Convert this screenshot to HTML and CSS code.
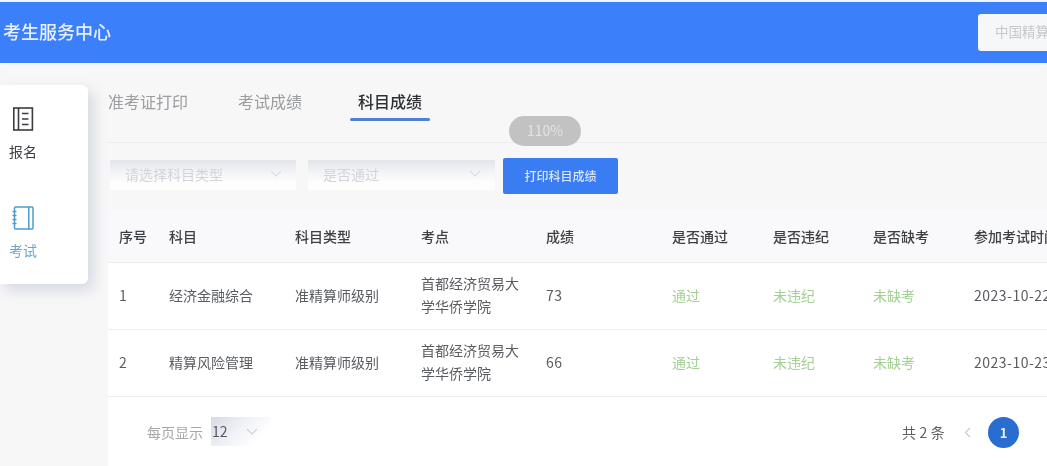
FILE: index.html
```html
<!DOCTYPE html>
<html lang="zh-CN">
<head>
<meta charset="utf-8">
<title>考生服务中心</title>
<link rel="stylesheet" href="styles.css">
</head>
<body>
<div class="page">
  <header class="topbar">
    <div class="brand">考生服务中心</div>
    <div class="org-input">中国精算师协会</div>
  </header>
  <div class="content">
    <aside class="sidebar">
      <div class="nav-item">
        <svg class="nav-icon" width="24" height="26" viewBox="0 0 24 26" fill="none" stroke="#3a3d42" stroke-width="1.6">
          <rect x="2.8" y="2" width="18.6" height="22"/>
          <path d="M7.5 2v22M11 7.5h6.5M11 13h6.5M11 18.5h6.5"/>
        </svg>
        <span class="nav-label">报名</span>
      </div>
      <div class="nav-item is-active">
        <svg class="nav-icon" width="24" height="26" viewBox="0 0 24 26" fill="none" stroke="#4f9cc9" stroke-width="1.5">
          <rect x="3.5" y="2" width="18.5" height="22" rx="1"/>
          <path d="M17.8 2v22M1.5 6.5h4M1.5 10.5h4M1.5 14.5h4M1.5 18.5h4"/>
        </svg>
        <span class="nav-label">考试</span>
      </div>
    </aside>
    <main class="main">
      <nav class="tabs">
        <span class="tab">准考证打印</span>
        <span class="tab">考试成绩</span>
        <span class="tab is-active">科目成绩</span>
        <span class="zoom-badge">110%</span>
      </nav>
      <div class="filters">
        <div class="select select-wide"><span>请选择科目类型</span><svg class="chev" width="12" height="7" viewBox="0 0 12 7"><path d="M1 1l5 5 5-5" fill="none" stroke="#dcdee2" stroke-width="1.2"/></svg></div>
        <div class="select select-pass"><span>是否通过</span><svg class="chev" width="12" height="7" viewBox="0 0 12 7"><path d="M1 1l5 5 5-5" fill="none" stroke="#dcdee2" stroke-width="1.2"/></svg></div>
        <button class="print-btn" type="button">打印科目成绩</button>
      </div>
      <section class="panel">
        <table class="grades">
          <thead>
            <tr>
              <th class="c-no">序号</th><th class="c-sub">科目</th><th class="c-type">科目类型</th><th class="c-site">考点</th><th class="c-score">成绩</th><th class="c-pass">是否通过</th><th class="c-vio">是否违纪</th><th class="c-abs">是否缺考</th><th class="c-time">参加考试时间</th>
            </tr>
          </thead>
          <tbody>
            <tr>
              <td>1</td><td>经济金融综合</td><td>准精算师级别</td><td>首都经济贸易大学华侨学院</td><td class="num">73</td><td class="ok">通过</td><td class="ok">未违纪</td><td class="ok">未缺考</td><td class="time">2023-10-22 09:00</td>
            </tr>
            <tr>
              <td>2</td><td>精算风险管理</td><td>准精算师级别</td><td>首都经济贸易大学华侨学院</td><td class="num">66</td><td class="ok">通过</td><td class="ok">未违纪</td><td class="ok">未缺考</td><td class="time">2023-10-23 09:00</td>
            </tr>
          </tbody>
        </table>
        <footer class="pager">
          <div class="page-size"><span class="page-size-label">每页显示</span><div class="size-select"><span>12</span><svg class="chev" width="12" height="7" viewBox="0 0 12 7"><path d="M1 1l5 5 5-5" fill="none" stroke="#cfd1d6" stroke-width="1.2"/></svg></div></div>
          <div class="page-nav">
            <span class="total">共 2 条</span>
            <svg class="prev" width="7" height="11" viewBox="0 0 7 11"><path d="M6 1L1.5 5.5 6 10" fill="none" stroke="#c9cbce" stroke-width="1.3"/></svg>
            <span class="page-no">1</span>
          </div>
        </footer>
      </section>
    </main>
  </div>
</div>
</body>
</html>
```
FILE: styles.css
```css
* { box-sizing: border-box; }
html, body { margin: 0; height: 100%; }
body {
  overflow: hidden;
  background: #f7f7f7;
  font-family: "Noto Sans CJK SC", "Noto Sans", sans-serif;
  color: #55585d;
}
.page {
  width: 1047px;
  height: 466px;
  overflow: hidden;
  padding-top: 2px;
  background: linear-gradient(#f0f6fd 0, #f0f6fd 2px, #f7f7f7 2px);
  filter: blur(0.6px);
}
.topbar {
  height: 61px;
  background: #3c7ffa;
  display: flex;
  align-items: center;
  justify-content: space-between;
  box-shadow: 0 3px 4px #f1f6fd;
}
.brand {
  padding-left: 3px;
  color: #e9f0fb;
  font-size: 18px;
  line-height: 24px;
  font-weight: 500;
  margin-top: -4px;
}
.org-input {
  width: 69px;
  height: 37px;
  padding-left: 17px;
  overflow: hidden;
  white-space: nowrap;
  line-height: 35px;
  font-size: 13.5px;
  color: #c6c8cc;
  background: #f6f7f9;
  border-radius: 3px 0 0 3px;
}
.content {
  display: flex;
  align-items: flex-start;
  width: 1300px;
}
.sidebar {
  flex: none;
  width: 88px;
  height: 199px;
  margin-top: 22px;
  margin-right: 20px;
  padding-top: 21px;
  background: #fff;
  border-radius: 0 6px 6px 0;
  box-shadow: 5px 6px 14px rgba(170, 178, 200, 0.45);
  display: flex;
  flex-direction: column;
  gap: 44px;
}
.nav-item {
  display: flex;
  flex-direction: column;
  align-items: center;
  width: 46px;
  gap: 9px;
  color: #3c3f44;
  font-size: 14px;
  line-height: 20px;
}
.nav-item.is-active { color: #6aa7cd; }
.nav-icon { display: block; }
.main { flex: none; width: 1192px; }
.tabs {
  position: relative;
  height: 80px;
  padding-top: 26px;
  display: flex;
  align-items: flex-start;
  border-bottom: 1px solid #ececee;
  font-size: 16px;
  line-height: 24px;
}
.tab {
  position: relative;
  color: #9a9c9f;
  margin-right: 50px;
}
.tab + .tab { margin-right: 56px; }
.tab.is-active {
  color: #2d3034;
  font-weight: 500;
}
.tab.is-active::after {
  content: "";
  position: absolute;
  left: -8px;
  right: -8px;
  top: 29px;
  height: 3px;
  border-radius: 2px;
  background: #4d82d6;
}
.zoom-badge {
  position: absolute;
  left: 401px;
  top: 53px;
  width: 72px;
  height: 30px;
  border-radius: 15px;
  background: #c2c2c2;
  color: #e3e3e3;
  font-size: 14px;
  line-height: 29px;
  text-align: center;
}
.filters {
  height: 67px;
  padding-top: 15px;
  display: flex;
  align-items: flex-start;
}
.select {
  height: 30px;
  margin-top: 2px;
  display: flex;
  align-items: center;
  justify-content: space-between;
  padding: 0 14px 3px 15px;
  color: #d2d4d8;
  font-size: 14px;
  background: linear-gradient(180deg, #e3e5eb 0, #f4f5f7 45%, #fdfdfd 75%, #fdfdfd 100%);
}
.select-wide { width: 186px; margin-left: 2px; }
.select-pass { width: 187px; margin-left: 12px; }
.chev { flex: none; }
.print-btn {
  width: 115px;
  height: 36px;
  margin-left: 8px;
  border: 0;
  border-radius: 2px;
  background: #3a7df2;
  color: #d9e6fb;
  font: 500 12px/36px "Noto Sans CJK SC", sans-serif;
  padding: 0;
}
.panel {
  background: #fff;
}
.grades {
  border-collapse: collapse;
  table-layout: fixed;
  width: 1192px;
}
.grades th {
  height: 52px;
  padding: 0 0 0 11px;
  text-align: left;
  font-size: 14px;
  font-weight: 500;
  color: #3c3f44;
  background: #f9f9fb;
  border-bottom: 1px solid #eeeef0;
}
.grades td {
  height: 67px;
  padding: 0 11px 1px;
  font-size: 14px;
  line-height: 23px;
  color: #595c61;
  border-bottom: 1px solid #eeeef0;
}
.c-no { width: 50px; }
.c-sub { width: 126px; }
.c-type { width: 126px; }
.c-site { width: 125px; }
.c-score { width: 126px; }
.c-pass { width: 101px; }
.c-vio { width: 100px; }
.c-abs { width: 101px; }
.c-time { width: 437px; }
.grades td.ok { color: #a3d093; }
.grades td.num { letter-spacing: 0.5px; }
.grades td.time { white-space: nowrap; letter-spacing: 0.5px; }
.pager {
  width: 911px;
  height: 70px;
  padding-left: 39px;
  display: flex;
  align-items: center;
  justify-content: space-between;
  font-size: 14px;
}
.page-size {
  display: flex;
  align-items: center;
  gap: 8px;
}
.page-size-label { color: #a5a7ab; }
.size-select {
  width: 60px;
  height: 29px;
  display: flex;
  align-items: center;
  gap: 18px;
  color: #55585d;
  font-size: 14px;
  background: linear-gradient(135deg, #d7dae5 0, #f1f2f6 45%, #fff 80%);
  padding-left: 1px;
  margin-top: -1px;
}
.page-nav {
  display: flex;
  align-items: center;
  margin-top: 1px;
}
.total { color: #5e6064; margin-right: 19px; letter-spacing: 0.2px; }
.prev { margin-right: 17px; }
.page-no {
  width: 31px;
  height: 31px;
  border-radius: 50%;
  background: #2a6dd0;
  color: #e8f0fb;
  font-size: 13px;
  font-weight: 700;
  line-height: 31px;
  text-align: center;
}
```
